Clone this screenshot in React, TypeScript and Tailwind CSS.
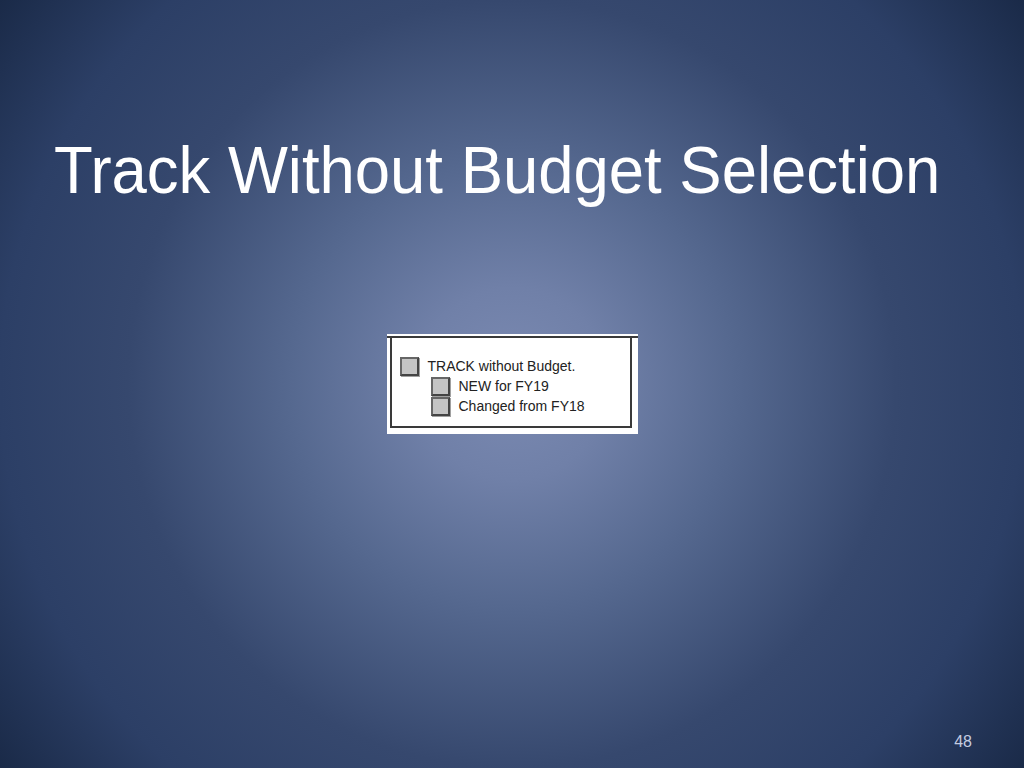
import React from 'react';

// Grey, slightly bevelled checkbox like the ones on the scanned form
function FormCheckbox() {
  return (
    <span className="block w-[19px] h-[19px] shrink-0 bg-[#c4c4c4] border-2 border-[#666] border-b-[#444] border-r-[#444] shadow-[1px_1px_0_#a0a0a0]" />
  );
}

function OptionRow({ label, indent }: { label: string; indent?: boolean }) {
  return (
    <div className={`flex items-center gap-[9px] h-[20px] ${indent ? 'pl-[31px]' : ''}`}>
      <FormCheckbox />
      <span className="text-[14px] leading-[20px] text-[#222] whitespace-nowrap">{label}</span>
    </div>
  );
}

// Clipped piece of the budget form showing the tracking options
function FormExcerpt() {
  return (
    <div className="w-[251px] h-[100px] bg-white pt-[2px] flex flex-col font-['Liberation_Sans',Arial,sans-serif]">
      <div className="border-t-2 border-[#3a3a3a] flex">
        <div className="w-[242px] h-[90px] ml-[3px] border-l-2 border-b-2 border-r-2 border-[#3a3a3a] pl-[8px] pt-[18px]">
          <OptionRow label="TRACK without Budget." />
          <OptionRow label="NEW for FY19" indent />
          <OptionRow label="Changed from FY18" indent />
        </div>
      </div>
    </div>
  );
}

export default function App() {
  return (
    <div className="w-[1024px] h-[768px] overflow-hidden flex flex-col bg-[radial-gradient(circle_farthest-corner_at_50%_50%,#7b8ab2_0%,#7080a8_15%,#55688f_35%,#36486e_60%,#2c3f66_80%,#1a2a48_100%)] font-['Liberation_Sans',Arial,sans-serif]">
      <h1 className="mt-[136px] ml-[54px] text-[67px] leading-none text-white whitespace-nowrap origin-left scale-x-[0.947]">
        Track Without Budget Selection
      </h1>
      <div className="mt-[131px] flex justify-center">
        <FormExcerpt />
      </div>
      <div className="mt-auto pb-[18px] pr-[52px] flex justify-end">
        <span className="text-[16px] leading-none text-[#c4cce0]">48</span>
      </div>
    </div>
  );
}
